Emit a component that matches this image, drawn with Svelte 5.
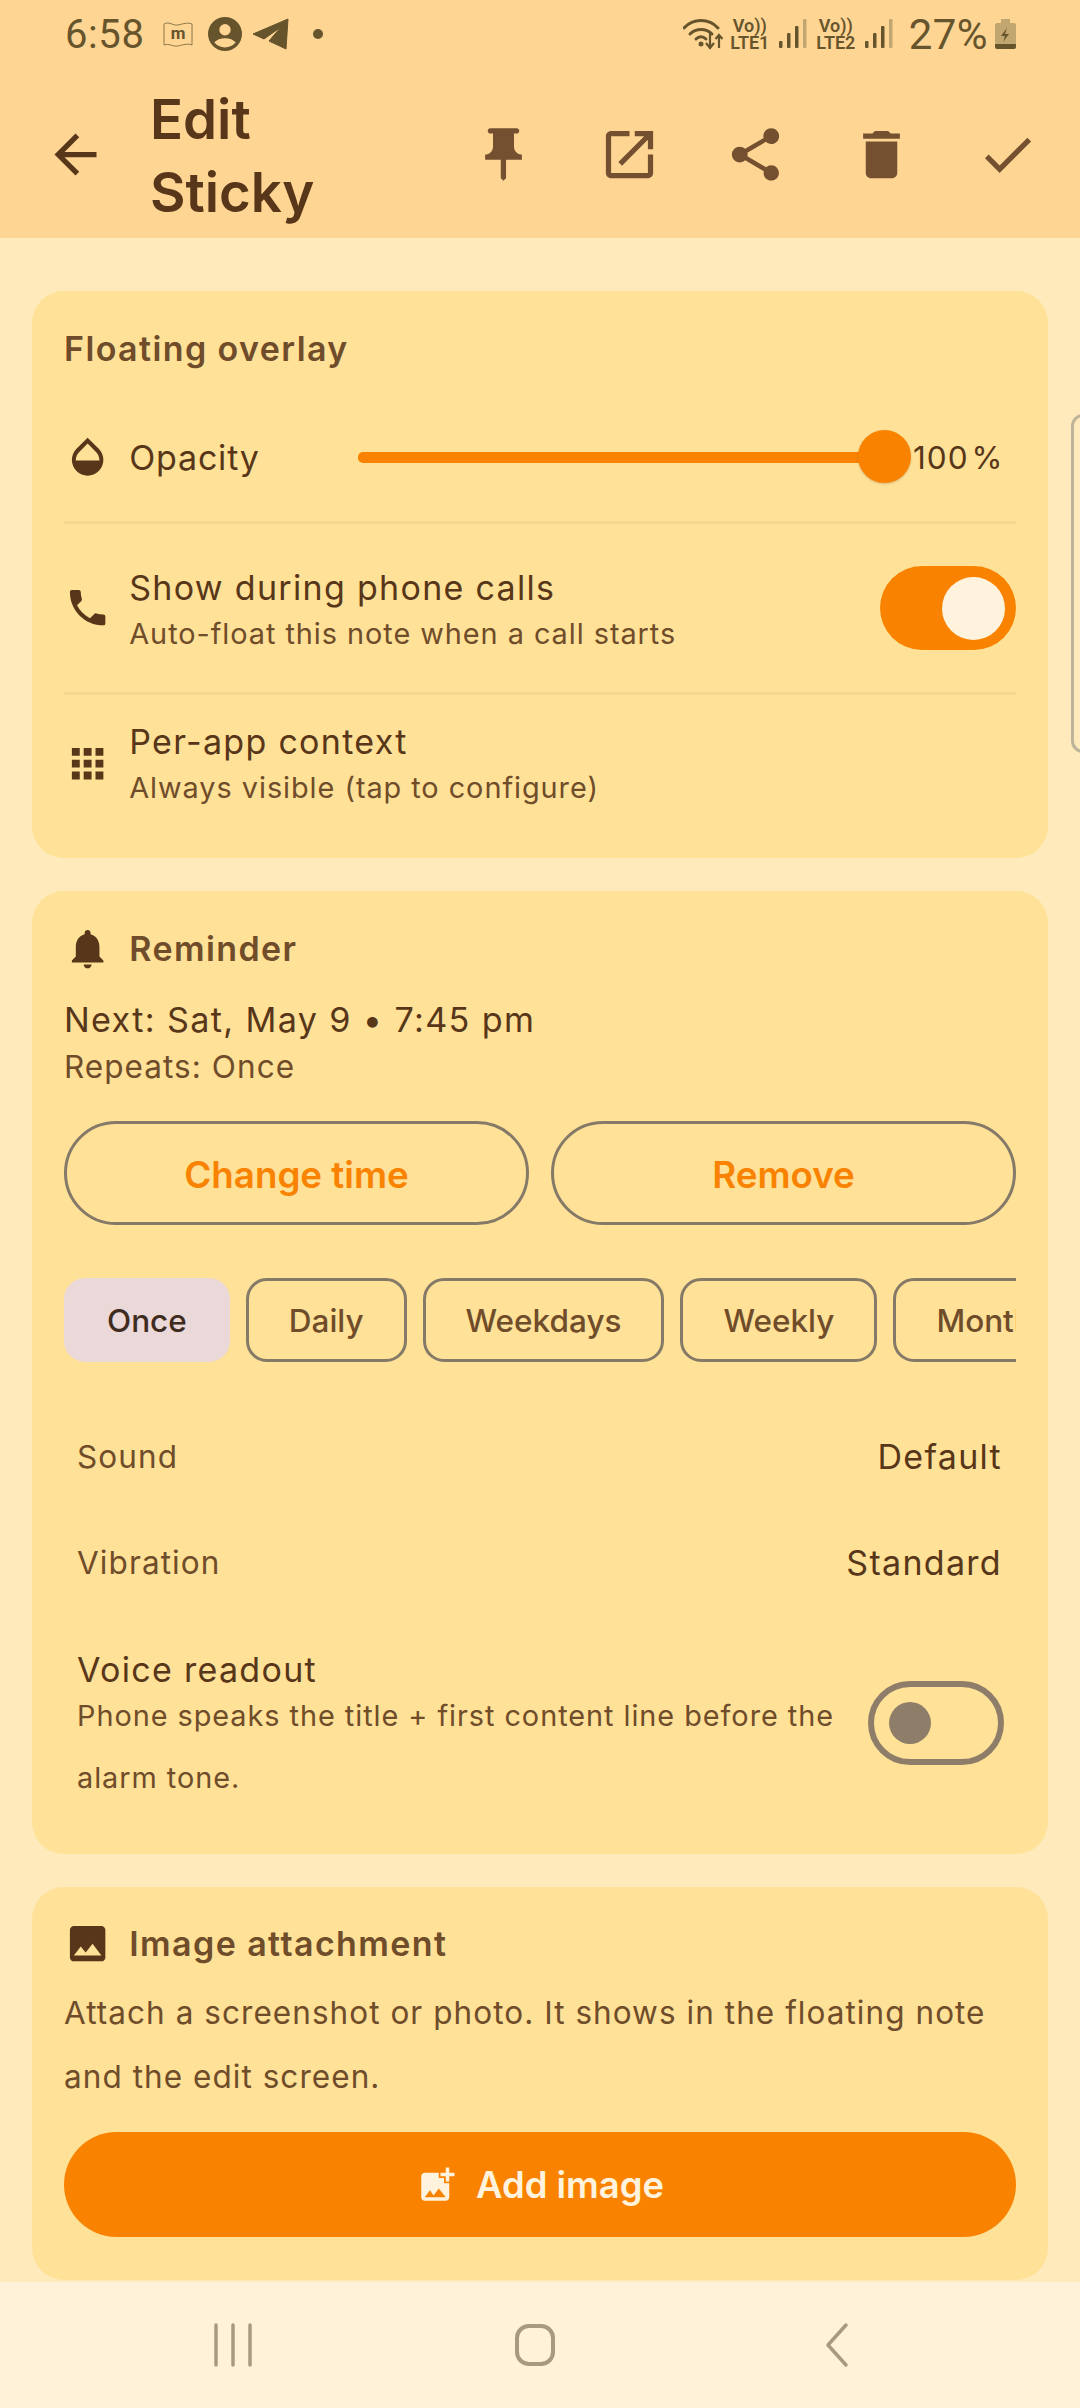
<script>
  const opacity = 100;
  const chips = ['Once', 'Daily', 'Weekdays', 'Weekly', 'Monthly'];
  const actions = [
    'M16 9V4h1c.55 0 1-.45 1-1s-.45-1-1-1H7c-.55 0-1 .45-1 1s.45 1 1 1h1v5c0 1.66-1.34 3-3 3v2h5.97v7l1 1 1-1v-7H19v-2c-1.66 0-3-1.34-3-3z',
    'M19 19H5V5h7V3H5c-1.11 0-2 .9-2 2v14c0 1.1.89 2 2 2h14c1.1 0 2-.9 2-2v-7h-2v7zM14 3v2h3.59l-9.83 9.83 1.41 1.41L19 6.41V10h2V3h-7z',
    'M18 16.08c-.76 0-1.44.3-1.96.77L8.91 12.7c.05-.23.09-.46.09-.7s-.04-.47-.09-.7l7.05-4.11c.54.5 1.25.81 2.04.81 1.66 0 3-1.34 3-3s-1.34-3-3-3-3 1.34-3 3c0 .24.04.47.09.7L8.04 9.81C7.5 9.31 6.79 9 6 9c-1.66 0-3 1.34-3 3s1.34 3 3 3c.79 0 1.5-.31 2.04-.81l7.12 4.16c-.05.21-.08.43-.08.65 0 1.61 1.31 2.92 2.92 2.92 1.61 0 2.92-1.31 2.92-2.92s-1.31-2.92-2.92-2.92z',
    'M6 19c0 1.1.9 2 2 2h8c1.1 0 2-.9 2-2V7H6v12zM19 4h-3.5l-1-1h-5l-1 1H5v2h14V4z',
    'M9 16.17L4.83 12l-1.41 1.41L9 19 21 7l-1.41-1.41z'
  ];
</script>

<div class="screen">
  <header class="top">
    <div class="status">
      <div class="status-left">
        <span class="clock">6:58</span>
        <svg class="st-m" viewBox="0 0 30 26" width="30" height="26">
          <path d="M1 3c5-3 9 2 14 1s9-3 14-1v21c-5-2-9 0-14 1s-9-3-14-1z" fill="none" stroke="#8a7748" stroke-width="1" />
          <text x="15" y="18" text-anchor="middle" class="st-m-text">m</text>
        </svg>
        <svg class="st-avatar" viewBox="0 0 24 24" width="34" height="34">
          <path fill="#66542c" fill-rule="evenodd" d="M12 0a12 12 0 1 0 0 24 12 12 0 0 0 0-24zm0 5a4 4 0 1 1 0 8 4 4 0 0 1 0-8zm0 16.5c-3 0-5.800-1.300-7.600-3.600 1.700-1.800 4.500-2.900 7.600-2.900s5.900 1.100 7.600 2.900c-1.800 2.300-4.600 3.600-7.600 3.600z" />
        </svg>
        <svg class="st-tg" viewBox="0 0 36 32" width="36" height="32">
          <path fill="#66542c" d="M35 1 33 31 16 23 28 9 11 21 0 16z" stroke="#66542c" stroke-linejoin="round" stroke-width="1" />
        </svg>
        <span class="st-dot"></span>
      </div>
      <div class="status-right">
        <svg viewBox="0 0 42 32" width="42" height="32">
          <g fill="none" stroke="#66542c" stroke-width="3" stroke-linecap="round">
            <path d="M1 10c9-10 25-10 34 0" />
            <path d="M7 16c6-6 16-6 22 0" />
            <path d="M13 21c3-3 7-3 10 0" />
          </g>
          <circle cx="18" cy="26" r="2.500" fill="#66542c" />
          <path d="M27 15v14M23 25l4 5 4-5M36 30V17M32.500 21l3.500-4 3.500 4" fill="none" stroke="#66542c" stroke-width="2.200" />
        </svg>
        <div class="volte"><span class="vo">Vo))</span><span class="lte">LTE1</span></div>
        <svg viewBox="0 0 28 30" width="28" height="30">
          <rect x="0" y="22" width="3.500" height="7" rx="1" fill="#66542c" />
          <rect x="8" y="14" width="3.500" height="15" rx="1" fill="#66542c" />
          <rect x="16" y="7" width="3.500" height="22" rx="1" fill="#66542c" />
          <rect x="24" y="0" width="3.500" height="29" rx="1" fill="#c2a670" />
        </svg>
        <div class="volte second"><span class="vo">Vo))</span><span class="lte">LTE2</span></div>
        <svg viewBox="0 0 28 30" width="28" height="30">
          <rect x="0" y="22" width="3.500" height="7" rx="1" fill="#66542c" />
          <rect x="8" y="14" width="3.500" height="15" rx="1" fill="#66542c" />
          <rect x="16" y="7" width="3.500" height="22" rx="1" fill="#66542c" />
          <rect x="24" y="0" width="3.500" height="29" rx="1" fill="#c2a670" />
        </svg>
        <span class="battery-text">27%</span>
        <svg class="battery" viewBox="0 0 21 30" width="21" height="30">
          <path fill="#c2a670" d="M6 0h9v4h4a2 2 0 0 1 2 2v20a2 2 0 0 1-2 2H2a2 2 0 0 1-2-2V6a2 2 0 0 1 2-2h4z" />
          <path fill="#66542c" d="M0 25h21v3a2 2 0 0 1-2 2H2a2 2 0 0 1-2-2z" />
          <path fill="#66542c" d="M12 9 6 17h4l-2 6 6-8h-4z" />
        </svg>
      </div>
    </div>
    <div class="toolbar">
      <button class="icon-btn back" type="button" aria-label="Back">
        <svg viewBox="0 0 24 24"><path d="M20 11H7.830l5.590-5.590L12 4l-8 8 8 8 1.410-1.410L7.830 13H20v-2z" /></svg>
      </button>
      <h1>Edit<br />Sticky</h1>
      {#each actions as d}
        <button class="icon-btn" type="button" aria-label="Action">
          <svg viewBox="0 0 24 24"><path {d} /></svg>
        </button>
      {/each}
    </div>
  </header>

  <main class="content">
    <section class="card overlay">
      <h2 class="plain">Floating overlay</h2>
      <div class="row slider-row">
        <svg class="row-icon" viewBox="0 0 24 24"><path d="M17.660 8L12 2.350 6.340 8C4.780 9.560 4 11.640 4 13.640s.78 4.110 2.340 5.670 3.610 2.350 5.660 2.350 4.100-.79 5.660-2.350S20 15.640 20 13.640 19.220 9.560 17.660 8zM6 14c.01-2 .62-3.270 1.760-4.400L12 5.270l4.240 4.380C17.380 10.770 17.990 12 18 14H6z" /></svg>
        <span class="slider-label">Opacity</span>
        <div class="slider">
          <div class="track" style="width: calc((100% - 29px) * {opacity / 100})"></div>
          <div class="thumb" style="left: calc((100% - 29px) * {opacity / 100})"></div>
        </div>
        <span class="value">100<span class="pct">%</span></span>
      </div>
      <div class="row toggle-row">
        <svg class="row-icon" viewBox="0 0 24 24"><path d="M6.620 10.790c1.440 2.830 3.760 5.140 6.590 6.590l2.200-2.200c.27-.27.67-.36 1.020-.24 1.120.37 2.330.57 3.570.57.55 0 1 .45 1 1V20c0 .55-.45 1-1 1-9.390 0-17-7.610-17-17 0-.55.45-1 1-1h3.500c.55 0 1 .45 1 1 0 1.250.2 2.450.57 3.570.11.35.03.74-.25 1.020l-2.200 2.200z" /></svg>
        <div class="row-text">
          <div class="row-title">Show during phone calls</div>
          <div class="row-sub">Auto-float this note when a call starts</div>
        </div>
        <div class="switch on"><span class="knob"></span></div>
      </div>
      <div class="row app-row">
        <svg class="row-icon" viewBox="0 0 24 24"><path d="M4 8h4V4H4v4zm6 12h4v-4h-4v4zm-6 0h4v-4H4v4zm0-6h4v-4H4v4zm6 0h4v-4h-4v4zm6-10v4h4V4h-4zm-6 4h4V4h-4v4zm6 6h4v-4h-4v4zm0 6h4v-4h-4v4z" /></svg>
        <div class="row-text">
          <div class="row-title">Per-app context</div>
          <div class="row-sub">Always visible (tap to configure)</div>
        </div>
      </div>
    </section>

    <section class="card reminder">
      <h2>
        <svg class="row-icon" viewBox="0 0 24 24"><path d="M12 22c1.100 0 2-.9 2-2h-4c0 1.100.89 2 2 2zm6-6v-5c0-3.070-1.640-5.640-4.500-6.320V4c0-.83-.67-1.500-1.500-1.500s-1.500.67-1.500 1.500v.68C7.630 5.360 6 7.920 6 11v5l-2 2v1h16v-1l-2-2z" /></svg>
        Reminder
      </h2>
      <div class="next">Next: Sat, May 9 • 7:45 pm</div>
      <div class="repeats">Repeats: Once</div>
      <div class="buttons">
        <button class="outlined" type="button">Change time</button>
        <button class="outlined" type="button">Remove</button>
      </div>
      <div class="chips">
        {#each chips as chip, i}
          <button class="chip" class:selected={i === 0} type="button">{chip}</button>
        {/each}
      </div>
      <div class="setting"><span class="setting-name">Sound</span><span class="setting-value">Default</span></div>
      <div class="setting"><span class="setting-name">Vibration</span><span class="setting-value">Standard</span></div>
      <div class="voice">
        <div class="voice-text">
          <div class="voice-title">Voice readout</div>
          <div class="voice-sub">Phone speaks the title + first content line before the alarm tone.</div>
        </div>
        <div class="switch off"><span class="knob"></span></div>
      </div>
    </section>

    <section class="card image">
      <h2>
        <svg class="row-icon" viewBox="0 0 24 24"><path d="M21 19V5c0-1.100-.9-2-2-2H5c-1.100 0-2 .9-2 2v14c0 1.100.9 2 2 2h14c1.100 0 2-.9 2-2zM8.500 13.500l2.500 3.010L14.500 12l4.500 6H5l3.500-4.500z" /></svg>
        Image attachment
      </h2>
      <p class="desc">Attach a screenshot or photo. It shows in the floating note and the edit screen.</p>
      <button class="add" type="button">
        <svg viewBox="0 0 24 24"><path d="M19 7v2.990s-1.990.01-2 0V7h-3s.01-1.990 0-2h3V2h2v3h3v2h-3zm-3 4V8h-3V5H5c-1.100 0-2 .9-2 2v12c0 1.100.9 2 2 2h12c1.100 0 2-.9 2-2v-8h-3zM5 19l3-4 2 3 3-4 4 5H5z" /></svg>
        Add image
      </button>
    </section>
  </main>

  <nav class="nav">
    <svg viewBox="0 0 40 44" width="40" height="44"><path d="M3 2v40M20 2v40M37 2v40" stroke="#a89a80" stroke-width="3.500" stroke-linecap="round" fill="none" /></svg>
    <svg class="nav-home" viewBox="0 0 44 44" width="44" height="44"><rect x="4" y="3" width="36" height="38" rx="12" stroke="#a89a80" stroke-width="4" fill="none" /></svg>
    <svg class="nav-back" viewBox="0 0 26 46" width="26" height="46"><path d="M22 3 4 23l18 20" stroke="#a89a80" stroke-width="3.500" stroke-linecap="round" stroke-linejoin="round" fill="none" /></svg>
  </nav>

  <div class="edge-handle"></div>
</div>

<style>
  :global(body) {
    margin: 0;
  }

  .screen {
    position: relative;
    width: 1080px;
    height: 2408px;
    overflow: hidden;
    display: flex;
    flex-direction: column;
    background: #ffeabb;
    font-family: Inter, 'Noto Sans', sans-serif;
    color: #573619;
  }

  button {
    font-family: inherit;
    background: none;
    border: none;
    padding: 0;
  }

  .top {
    height: 238px;
    flex: none;
    background: #ffd594;
  }

  .status {
    height: 68px;
    padding: 0 64px 0 65px;
    display: flex;
    justify-content: space-between;
    align-items: center;
    color: #66542c;
  }

  .status-left,
  .status-right {
    display: flex;
    align-items: center;
  }

  .clock {
    font-family: Roboto, sans-serif;
    font-size: 40px;
    letter-spacing: 0.6px;
    width: 98px;
  }

  .st-m {
    margin-right: 15px;
  }

  .st-m-text {
    font-family: Roboto, sans-serif;
    font-size: 17px;
    font-weight: 700;
    fill: #66542c;
  }

  .st-avatar {
    margin-right: 11px;
  }

  .st-dot {
    width: 10px;
    height: 10px;
    border-radius: 50%;
    background: #66542c;
    margin-left: 24px;
  }

  .volte {
    display: flex;
    flex-direction: column;
    align-items: center;
    width: 40px;
    margin: 0 9px 0 5px;
    font-family: Roboto, sans-serif;
    font-weight: 600;
    line-height: 17px;
  }

  .volte.second {
    margin-left: 9px;
    margin-right: 9px;
  }

  .vo {
    font-size: 18px;
  }

  .lte {
    font-size: 18px;
  }

  .battery-text {
    font-family: Roboto, sans-serif;
    font-size: 42px;
    letter-spacing: 0.4px;
    margin: 0 7px 0 16px;
  }

  .toolbar {
    height: 170px;
    box-sizing: border-box;
    padding: 3px 10px 0 12px;
    display: flex;
    align-items: center;
  }

  .icon-btn {
    width: 126px;
    height: 126px;
    flex: none;
    display: flex;
    align-items: center;
    justify-content: center;
  }

  .icon-btn svg {
    width: 63px;
    height: 63px;
    fill: #755030;
  }

  .icon-btn.back svg {
    fill: #573619;
  }

  h1 {
    flex: 1;
    margin: 0 0 0 12px;
    padding-top: 3px;
    font-size: 54.6px;
    line-height: 73.5px;
    font-weight: 600;
    color: #573619;
  }

  .content {
    flex: 1;
    min-height: 0;
    overflow: hidden;
    padding: 53px 32px 0;
    display: flex;
    flex-direction: column;
    gap: 33px;
  }

  .card {
    flex: none;
    box-sizing: border-box;
    background: #ffe197;
    border-radius: 32px;
    padding: 36px 32px 0;
  }

  .card.overlay {
    height: 567px;
  }

  .card.reminder {
    height: 963px;
  }

  .card.image {
    height: 393px;
    padding-top: 35px;
  }

  h2 {
    margin: 0;
    height: 44px;
    display: flex;
    align-items: center;
    gap: 18px;
    font-size: 34px;
    line-height: 44px;
    font-weight: 600;
    letter-spacing: 1.4px;
    color: #6f4c2a;
  }

  .row {
    display: flex;
    align-items: center;
    gap: 18px;
    box-sizing: border-box;
  }

  .row-icon {
    width: 47.25px;
    height: 47.25px;
    flex: none;
    fill: #573619;
  }

  .slider-row {
    margin-top: 22px;
    height: 131px;
    gap: 0;
    border-bottom: 3px solid #f6d78f;
  }

  .slider-label {
    margin-left: 18px;
    width: 229px;
    font-size: 34px;
    letter-spacing: 0.8px;
    flex: none;
  }

  .slider {
    position: relative;
    flex: 1;
    height: 54px;
  }

  .track {
    position: absolute;
    left: 0;
    top: 22px;
    height: 10.5px;
    border-radius: 5px;
    background: #f98300;
  }

  .thumb {
    position: absolute;
    top: 0;
    width: 53px;
    height: 53px;
    margin-left: -26.5px;
    border-radius: 50%;
    background: #f98300;
    box-shadow: 0 1px 2px rgba(90, 60, 20, 0.25);
  }

  .value {
    width: 103px;
    flex: none;
    font-size: 31.5px;
    letter-spacing: 1px;
  }

  .pct {
    margin-left: 3px;
  }

  .toggle-row {
    height: 171px;
    border-bottom: 3px solid #f6d78f;
  }

  .toggle-row .row-text {
    padding-top: 3px;
  }

  .app-row {
    height: 138px;
  }

  .row-text {
    flex: 1;
  }

  .row-title {
    font-size: 34px;
    line-height: 48px;
    letter-spacing: 1.3px;
  }

  .row-sub {
    font-size: 28.875px;
    line-height: 44px;
    letter-spacing: 0.95px;
    color: #6f4c2a;
  }

  .switch {
    position: relative;
    flex: none;
    width: 136.5px;
    height: 84px;
    box-sizing: border-box;
    border-radius: 42px;
  }

  .switch.on {
    background: #f98300;
  }

  .switch.off {
    border: 6px solid #8e7e69;
  }

  .knob {
    position: absolute;
    border-radius: 50%;
  }

  .on .knob {
    right: 11px;
    top: 10.5px;
    width: 63px;
    height: 63px;
    background: #fff3dd;
  }

  .off .knob {
    left: 15px;
    top: 15px;
    width: 42px;
    height: 42px;
    background: #8e7e69;
  }

  .next {
    margin-top: 25px;
    font-size: 34.2px;
    line-height: 48px;
    letter-spacing: 1.35px;
  }

  .repeats {
    font-size: 31.5px;
    line-height: 46px;
    letter-spacing: 1.05px;
    color: #6f4c2a;
  }

  .buttons {
    margin-top: 31px;
    display: flex;
    gap: 22px;
  }

  .outlined {
    flex: 1;
    height: 104px;
    padding-top: 2px;
    border: 3px solid #857a68;
    border-radius: 52px;
    font-size: 36.75px;
    font-weight: 600;
    color: #f98300;
  }

  .chips {
    margin-top: 53px;
    display: flex;
    gap: 16px;
    overflow: hidden;
  }

  .chip {
    flex: none;
    height: 84px;
    box-sizing: border-box;
    padding: 0 40px;
    border: 3px solid #857a68;
    border-radius: 21px;
    font-size: 31.5px;
    font-weight: 500;
    color: #6f4c2a;
  }

  .chip.selected {
    border-color: #ebd8d8;
    background: #ebd8d8;
    color: #3f2c20;
  }

  .setting {
    height: 106px;
    padding: 0 14px 0 13px;
    display: flex;
    justify-content: space-between;
    align-items: center;
    font-size: 34px;
    letter-spacing: 1.3px;
  }

  .chips + .setting {
    margin-top: 41px;
  }

  .setting-name {
    font-size: 31.5px;
    letter-spacing: 1.1px;
    color: #6f4c2a;
  }

  .voice {
    margin-top: 40px;
    padding: 0 12px 0 13px;
    display: flex;
    justify-content: space-between;
    gap: 20px;
  }

  .voice-text {
    flex: 1;
  }

  .voice-title {
    font-size: 34px;
    line-height: 30px;
    letter-spacing: 1.3px;
  }

  .voice-sub {
    font-size: 28.875px;
    line-height: 62px;
    letter-spacing: 0.95px;
    color: #6f4c2a;
  }

  .voice .switch {
    margin-top: 26px;
  }

  .desc {
    margin: 15px 0 0;
    font-size: 31.5px;
    line-height: 64px;
    letter-spacing: 1.05px;
    color: #6f4c2a;
  }

  .add {
    margin-top: 23px;
    width: 100%;
    height: 105px;
    border-radius: 53px;
    background: #f98300;
    color: #fff3dd;
    font-size: 36.4px;
    font-weight: 600;
    display: flex;
    align-items: center;
    justify-content: center;
    gap: 18px;
  }

  .add svg {
    width: 42px;
    height: 42px;
    fill: #fff3dd;
  }

  .nav {
    height: 126px;
    flex: none;
    box-sizing: border-box;
    background: #fff2d9;
    display: flex;
    align-items: center;
    padding: 0 0 1px 213px;
  }

  .nav-home {
    margin-left: 260px;
  }

  .nav-back {
    margin-left: 267px;
  }

  .edge-handle {
    position: absolute;
    left: 1071px;
    top: 414px;
    width: 30px;
    height: 339px;
    box-sizing: border-box;
    border: 3px solid #bdb49a;
    border-radius: 12px;
  }
</style>
